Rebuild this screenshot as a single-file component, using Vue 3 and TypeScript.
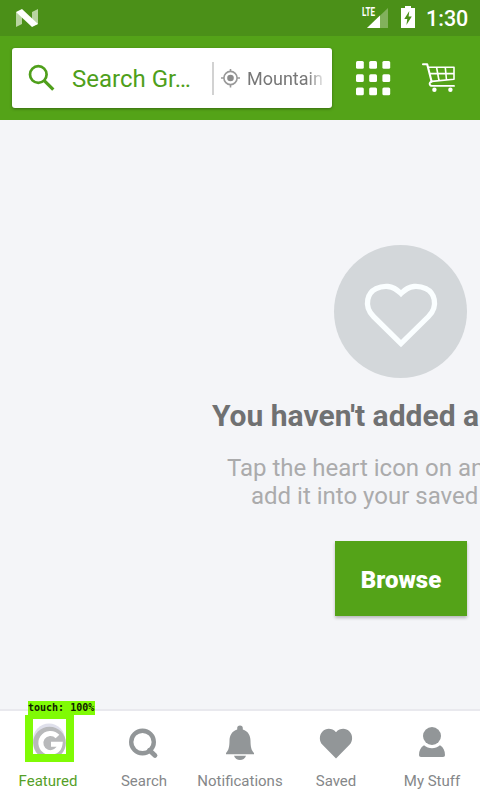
<script setup lang="ts">
interface Tab {
  id: string
  label: string
}

const tabs: Tab[] = [
  { id: 'featured', label: 'Featured' },
  { id: 'search', label: 'Search' },
  { id: 'notifications', label: 'Notifications' },
  { id: 'saved', label: 'Saved' },
  { id: 'stuff', label: 'My Stuff' },
]
const active = 'featured'
const dots = [0, 13.2, 26.4]
</script>

<template>
  <div class="screen">
    <header class="status">
      <svg class="nougat" width="22" height="20" viewBox="0 0 22 20">
        <path d="M0 3 6 5V15L0 18Z M16 3 22 0V15L16 17Z" fill="#b8d4a0" />
        <path d="M0 3 6 0 22 15 16 18Z" fill="#fff" />
      </svg>
      <svg class="signal" width="28" height="22" viewBox="0 0 28 22">
        <text x="0" y="9.2" class="lte" textLength="13" lengthAdjust="spacingAndGlyphs">LTE</text>
        <path d="M5 21 26 1V21Z" fill="#82b15c" />
        <path d="M5 21 18 8.6V21Z" fill="#fff" />
      </svg>
      <svg class="battery" width="14" height="22" viewBox="0 0 14 22">
        <path d="M4 0H10V2H14V22H0V2H4Z" fill="#fff" />
        <path d="M8.3 5 3.3 13H6.3L5.4 19 10.8 10.6H7.6Z" fill="#4b9018" />
      </svg>
      <span class="clock">1:30</span>
    </header>

    <div class="toolbar">
      <div class="searchbox">
        <svg class="magnifier" width="27" height="27" viewBox="0 0 27 27" fill="none" stroke="#4f9f1b">
          <circle cx="10.3" cy="9.5" r="8.3" stroke-width="2.7" />
          <path d="M16 15.3 25.3 24.7" stroke-width="3.2" />
        </svg>
        <span class="query">Search Gr…</span>
        <i class="divider"></i>
        <svg class="locate" width="19" height="19" viewBox="0 0 19 19" fill="none" stroke="#999" stroke-width="1.6">
          <circle cx="9.5" cy="9" r="6.6" />
          <circle cx="9.5" cy="9" r="3.3" fill="#8c8c8c" stroke="none" />
          <path d="M9.5 0V3M9.5 15.5V18.5M0 9H3M16 9H19" />
        </svg>
        <span class="place">Mountain</span>
      </div>
      <svg class="grid" width="35" height="35" viewBox="0 0 35 35" fill="#fff">
        <template v-for="y in dots" :key="y">
          <rect v-for="x in dots" :key="x" :x="x" :y="y" width="7.8" height="7.8" rx="1.5" />
        </template>
      </svg>
      <svg class="cart" width="34" height="30" viewBox="0 0 34 30" fill="none" stroke="#fff" stroke-linejoin="round" stroke-linecap="round">
        <path d="M1 1.3H5.2L9.6 18.6" stroke-width="2.1" />
        <path d="M6.3 4.2H32V16.2L9.8 18.4M8.3 10.6H31.6M14.6 4.5 17 17.5M23.3 4.5 24.5 17" stroke-width="1.6" />
        <path d="M9.6 18.6C6.6 19.6 7.3 22.9 10.2 22.9H32" stroke-width="1.9" />
        <circle cx="12.4" cy="26.8" r="2.2" fill="#fff" stroke="none" />
        <circle cx="28.4" cy="26.8" r="2.2" fill="#fff" stroke="none" />
      </svg>
    </div>

    <main class="empty">
      <div class="badge">
        <svg width="74" height="66" viewBox="0 0 74 66">
          <path d="M37 60.6 9.5 33.5C4 28 2.8 21.5 3.8 16.5 6 5.5 17 3 24 3.5 30 4 33 6.5 37 10.5 41 6.5 44 4 50 3.5 57 3 68 5.5 70.2 16.5 71.2 21.5 70 28 64.5 33.5Z" fill="none" stroke="#fafeff" stroke-width="5.3" />
        </svg>
      </div>
      <h1>You haven't added a</h1>
      <p class="hint">Tap the heart icon on an</p>
      <p class="hint second">add it into your saved</p>
      <button class="browse">Browse</button>
    </main>

    <nav class="tabs">
      <div v-for="tab in tabs" :key="tab.id" class="tab" :class="{ active: tab.id === active }">
        <svg class="icon" width="48" height="48" viewBox="0 0 48 48" fill="#929698">
          <g v-if="tab.id === 'featured'">
            <circle cx="25" cy="28.5" r="16" fill="#dfe0eb" />
            <circle cx="25.5" cy="32" r="16.3" fill="#b8b9bb" />
            <path d="M33.5 25.5A9.6 9.6 0 1 0 36 33.2H27" fill="none" stroke="#fff" stroke-width="5" />
          </g>
          <g v-else-if="tab.id === 'search'">
            <circle cx="22.5" cy="31" r="11.3" fill="none" stroke="#929698" stroke-width="4.4" />
            <path d="m29.5 39.2 5.5 5.2" stroke="#929698" stroke-width="4.8" stroke-linecap="round" />
          </g>
          <g v-else-if="tab.id === 'notifications'" transform="translate(0 -1.2)">
            <path d="M21.2 18.5A2.8 2.8 0 0 1 26.8 18.5V19.7C32 21.3 34.4 25.5 34.5 31 34.6 37.5 35.4 40.5 38 43.3V44.5H10V43.3C12.6 40.5 13.4 37.5 13.5 31 13.6 25.5 16 21.3 21.2 19.7Z" />
            <path d="M18 46H30C28.5 51.6 19.5 51.6 18 46Z" />
          </g>
          <path v-else-if="tab.id === 'saved'" transform="translate(0 -1)" d="M24 48.5 10.5 34.8C7 31 7 25 10.5 21.4 14 18 20 17.8 24 22.2 28 17.8 34 18 37.5 21.4 41 25 41 31 37.5 34.8Z" />
          <g v-else transform="translate(0 -1)">
            <circle cx="24" cy="26" r="9" />
            <path d="M16 35.3C20.5 39.2 27.5 39.2 32 35.3 35.5 37.3 37 41 37 45.2Q37 47 35 47H13Q11 47 11 45.2C11 41 12.5 37.3 16 35.3Z" />
          </g>
        </svg>
        <span class="label">{{ tab.label }}</span>
      </div>
      <div class="touch">
        <span class="touch-label">touch: 100%</span>
        <i class="touch-frame"></i>
      </div>
    </nav>
  </div>
</template>

<style>
body {
  margin: 0;
}
</style>

<style scoped>
.screen {
  width: 480px;
  height: 800px;
  display: flex;
  flex-direction: column;
  overflow: hidden;
  background: #f4f5f8;
  font-family: Roboto, sans-serif;
}
.screen svg {
  display: block;
  flex: none;
  overflow: visible;
}
.status {
  height: 36px;
  flex: none;
  display: flex;
  align-items: flex-start;
  background: #4b9018;
}
.nougat {
  margin: 9px 0 0 16px;
}
.signal {
  margin: 7px 0 0 324px;
}
.lte {
  font-size: 12px;
  font-weight: 700;
  fill: #fff;
}
.battery {
  margin: 6px 0 0 11px;
}
.clock {
  margin: 5px 0 0 11px;
  font-size: 21.5px;
  line-height: 28px;
  font-weight: 500;
  color: #fff;
}
.toolbar {
  height: 84px;
  flex: none;
  display: flex;
  align-items: center;
  background: #54a318;
}
.searchbox {
  width: 320px;
  height: 60px;
  box-sizing: border-box;
  margin-left: 12px;
  padding-left: 16px;
  display: flex;
  align-items: center;
  background: #fff;
  border-radius: 3px;
  box-shadow: 0 1px 3px rgba(0, 0, 0, 0.35);
}
.query {
  width: 140px;
  margin-left: 17px;
  font-size: 24px;
  line-height: 28px;
  padding-top: 2px;
  white-space: nowrap;
  color: #4f9f1b;
}
.divider {
  width: 2px;
  height: 33px;
  background: #d2d2d2;
}
.locate {
  margin-left: 7px;
}
.place {
  width: 76px;
  margin-left: 7px;
  padding-top: 2px;
  overflow: hidden;
  white-space: nowrap;
  font-size: 18px;
  line-height: 24px;
  color: #777;
  mask-image: linear-gradient(to right, #000 60px, transparent 80px);
}
.grid {
  margin-left: 24px;
}
.cart {
  margin-left: 31px;
}
.empty {
  flex: 1;
  min-height: 0;
  display: flex;
  flex-direction: column;
  align-items: flex-start;
  overflow: hidden;
  white-space: nowrap;
}
.badge {
  width: 133px;
  height: 133px;
  margin: 125px 0 0 334px;
  display: flex;
  align-items: center;
  justify-content: center;
  border-radius: 50%;
  background: #d3d7da;
}
.badge svg {
  margin-top: 8px;
}
h1 {
  margin: 20px 0 0 212px;
  font-size: 30px;
  line-height: 36px;
  font-weight: 700;
  color: #707172;
}
.hint {
  margin: 20px 0 0 227px;
  font-size: 24px;
  line-height: 28px;
  color: #ababac;
}
.second {
  margin: 0 0 0 251px;
}
.browse {
  width: 132px;
  height: 75px;
  flex: none;
  margin: 31px 0 0 335px;
  padding: 3px 0 0;
  border: 0;
  background: #54a318;
  box-shadow: 0 2px 3px rgba(0, 0, 0, 0.25);
  color: #fff;
  font: 900 24px Roboto, sans-serif;
}
.tabs {
  position: relative;
  height: 91px;
  flex: none;
  box-sizing: border-box;
  border-top: 2px solid #e9e9ee;
  display: flex;
  background: #fff;
}
.tab {
  width: 96px;
  display: flex;
  flex-direction: column;
  align-items: center;
  color: #858789;
}
.tab.active {
  color: #559f28;
}
.label {
  margin-top: 12px;
  font-size: 15px;
  line-height: 20px;
  white-space: nowrap;
}
/* Touch marker floats over the first tab */
.touch {
  position: absolute;
  left: 25px;
  top: -10px;
}
.touch-label {
  display: block;
  width: 67px;
  height: 14px;
  margin-left: 3px;
  background: #80fb05;
  color: #102000;
  font: 700 10px/14px "DejaVu Sans Mono", monospace;
  white-space: nowrap;
}
.touch-frame {
  display: block;
  box-sizing: border-box;
  width: 49px;
  height: 47px;
  border: 8px solid #80fb05;
  border-top-width: 4px;
}
</style>
